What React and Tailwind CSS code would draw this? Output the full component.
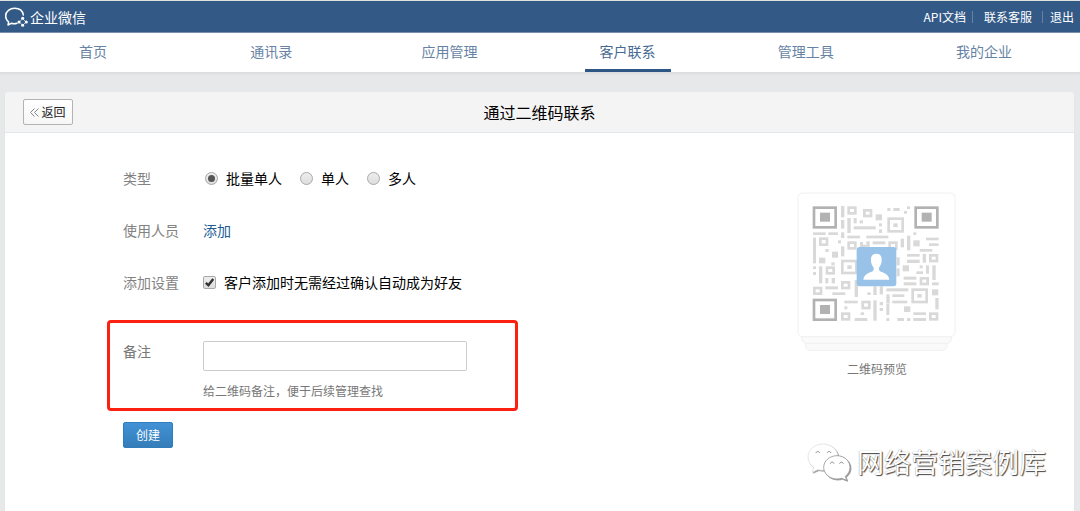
import { useState } from "react";
import clsx from "clsx";

const TABS = ["首页", "通讯录", "应用管理", "客户联系", "管理工具", "我的企业"];
const TYPES = ["批量单人", "单人", "多人"];

// [x, y, width, height] of the solid modules
const QR_BARS = [
    [152, 62, 10, 34], [152, 104, 10, 26], [171, 98, 10, 45], [190, 98, 9, 16], [208, 105, 10, 9],
    [190, 123, 66, 9], [256, 87, 19, 18], [266, 114, 9, 9], [266, 132, 9, 11], [291, 68, 9, 9],
    [309, 68, 19, 9], [350, 63, 9, 8], [341, 77, 9, 8], [68, 141, 38, 8], [114, 141, 29, 8],
    [152, 141, 10, 17], [171, 151, 38, 8], [228, 151, 66, 8], [350, 151, 10, 44], [369, 141, 9, 8],
    [331, 160, 10, 26], [68, 157, 9, 77], [143, 165, 9, 9], [152, 183, 10, 30], [105, 191, 10, 9],
    [125, 199, 18, 18], [209, 170, 9, 16], [218, 178, 9, 8], [247, 168, 38, 9], [228, 168, 10, 18],
    [369, 165, 19, 18], [407, 157, 38, 8], [416, 174, 29, 8], [388, 191, 38, 8], [350, 206, 38, 8],
    [397, 206, 10, 26], [350, 223, 38, 10], [319, 216, 9, 24], [319, 249, 9, 24], [337, 240, 19, 18],
    [388, 240, 9, 9], [378, 258, 20, 8], [407, 240, 9, 25], [426, 240, 10, 44], [86, 217, 19, 17],
    [123, 231, 10, 9], [68, 243, 9, 8], [68, 260, 9, 9], [86, 243, 10, 51], [105, 278, 9, 16],
    [124, 278, 10, 16], [340, 274, 38, 9], [340, 291, 38, 9], [425, 291, 20, 9], [193, 284, 10, 51],
    [105, 303, 38, 9], [126, 321, 39, 8], [231, 321, 10, 8], [249, 303, 10, 26], [268, 303, 10, 24],
    [288, 309, 66, 9], [288, 327, 10, 27], [306, 327, 36, 8], [306, 346, 45, 8], [425, 312, 19, 18],
    [435, 338, 10, 34], [162, 346, 40, 8], [249, 345, 10, 61], [268, 350, 10, 10], [268, 368, 10, 9],
    [288, 355, 9, 34], [341, 363, 19, 17], [162, 363, 9, 9], [211, 381, 10, 8], [369, 381, 38, 8],
    [193, 398, 38, 9], [288, 398, 9, 9], [321, 398, 20, 9], [350, 398, 10, 9], [369, 398, 38, 9],
];

// Hollow squares: [x, y, width, height]
const QR_RINGS = [
    [175, 67, 20, 17], [222, 75, 20, 17], [295, 100, 42, 38], [175, 172, 20, 17], [298, 172, 20, 18],
    [90, 160, 20, 18], [110, 247, 20, 17], [156, 227, 42, 36], [156, 291, 20, 17], [72, 308, 20, 17],
    [156, 385, 20, 17], [217, 350, 20, 18], [420, 210, 20, 17], [392, 279, 20, 17], [367, 313, 42, 37],
    [420, 385, 20, 17],
];

// Dots inside the large hollow squares
const QR_DOTS = [[309, 114], [171, 240], [381, 326]];

const QR_FINDERS = [[66, 62], [371, 62], [66, 339]];

function Logo() {
    return (
        <svg className="h-[21px] w-6" viewBox="12 18 72 63" fill="none" stroke="#fff" aria-hidden="true">
            <path
                d="M70 45C68 33 58 25 44 25S17 34 17 48c0 8 4 14 9 18l-2 9 10-5c6 2 11 2 17 0"
                strokeWidth="4.5"
                strokeLinejoin="round"
                strokeLinecap="round"
            />
            <path d="M68 56l10 10-10 10-10-10z" strokeWidth="2" />
            <g fill="#fff" stroke="none">
                <circle cx="68" cy="55" r="4.5" />
                <circle cx="79" cy="66" r="4.5" />
                <circle cx="68" cy="76" r="4.5" />
                <circle cx="57" cy="66" r="4.5" />
            </g>
        </svg>
    );
}

function QrPreview() {
    return (
        <svg className="size-40" viewBox="20 20 480 480" role="img" aria-label="二维码预览">
            <g fill="#fafafa" stroke="#f0f0f0" strokeWidth="3">
                <rect x="46" y="400" width="424" height="95" rx="14" />
                <rect x="34" y="380" width="449" height="94" rx="14" />
                <rect x="23" y="23" width="471" height="431" rx="14" fill="#fff" />
            </g>
            <g fill="#d9d9d9">
                {QR_BARS.map(([x, y, w, h]) => (
                    <rect key={`${x}-${y}`} x={x} y={y} width={w} height={h} />
                ))}
            </g>
            <g fill="#fff" stroke="#d9d9d9" strokeWidth="8">
                {QR_RINGS.map(([x, y, w, h]) => (
                    <rect key={`${x}-${y}`} x={x} y={y} width={w} height={h} />
                ))}
            </g>
            <g fill="#d9d9d9">
                {QR_DOTS.map(([x, y]) => (
                    <rect key={`${x}-${y}`} x={x} y={y} width="13" height="11" />
                ))}
            </g>
            {QR_FINDERS.map(([x, y]) => (
                <g key={`${x}-${y}`}>
                    <rect x={x + 5} y={y + 5} width="65" height="59" fill="none" stroke="#b2b2b2" strokeWidth="8" />
                    <rect x={x + 23} y={y + 20} width="30" height="27" fill="#b2b2b2" />
                </g>
            ))}
            <rect x="199" y="185" width="119" height="118" rx="9" fill="#99c2e8" />
            <path
                d="M258 205c-11 0-17 8-16 20 0 9 3 16 8 22 1 7-1 10-6 12-13 5-23 9-25 24h78c-2-15-12-19-25-24-5-2-7-5-6-12 5-6 8-13 8-22 1-12-5-20-16-20z"
                fill="#fff"
            />
        </svg>
    );
}

function Watermark() {
    return (
        <div className="pointer-events-none absolute right-[34px] bottom-[30px] flex items-center gap-[6px]">
            <svg
                className="h-[38px] w-11 drop-shadow-[1px_1px_0px_#999]"
                viewBox="24 36 132 114"
                fill="#fff"
                stroke="#ccc"
                strokeWidth="1.5"
                aria-hidden="true"
            >
                <path d="M72 39c-25 0-45 17-45 39 0 13 7 24 17 31l-4 15 17-8c5 1 10 2 15 2 25 0 45-18 45-40S97 39 72 39z" />
                <path
                    d="M114 74c-22 0-40 16-40 35s18 35 40 35c5 0 10-1 14-2l15 6-4-12c9-7 14-16 14-27 0-19-17-35-39-35z"
                    stroke="#999"
                    strokeWidth="2.5"
                />
                <g fill="none" stroke="#888" strokeWidth="3">
                    <path d="M51 66c1-6 9-6 11 0M85 66c1-6 9-6 11 0M94 98c1-6 9-6 11 0M122 98c1-6 9-6 11 0" />
                </g>
            </svg>
            <span className="text-[27px] leading-9 text-white [text-shadow:1px_1px_1px_#444,0_0_1px_#888]">
                网络营销案例库
            </span>
        </div>
    );
}

function App() {
    const [type, setType] = useState(TYPES[0]);
    const [autoAccept, setAutoAccept] = useState(true);
    const [remark, setRemark] = useState("");

    return (
        <div className="relative flex min-h-screen flex-col bg-[#e7e8ea] font-['Noto_Sans_CJK_SC',sans-serif] text-sm leading-5 text-black">
            <header className="flex h-[33px] items-center justify-between border-t border-b border-t-[#dfe3e0] border-b-[#7790ae] bg-[#335a87] pr-[6px] pl-1 text-white">
                <a href="#home" className="flex items-center gap-[2px]">
                    <Logo />
                    <span>企业微信</span>
                </a>
                <div className="flex items-center text-xs">
                    <a href="#api">API文档</a>
                    <span className="mr-[11px] ml-[6px] h-3 w-px bg-[#6583a5]" />
                    <a href="#support">联系客服</a>
                    <span className="mr-[7px] ml-[10px] h-3 w-px bg-[#6583a5]" />
                    <a href="#logout">退出</a>
                </div>
            </header>

            <nav className="flex h-10 border-b border-[#dcdddf] bg-white pr-[7px] pl-1 shadow-xs">
                {TABS.map((tab) => (
                    <div key={tab} className="flex flex-1 justify-center">
                        <a
                            href="#tab"
                            className={clsx(
                                "border-b-3 px-[15px] pt-2",
                                tab === "客户联系"
                                    ? "border-[#2d5685] text-[#476a92]"
                                    : "border-transparent text-[#6783a4]"
                            )}
                        >
                            {tab}
                        </a>
                    </div>
                ))}
            </nav>

            <main className="mr-[6px] ml-[5px] mt-[19px] flex flex-1 flex-col rounded-t-sm bg-white shadow-xs">
                <div className="grid h-[41px] grid-cols-3 items-center rounded-t-sm border-b border-[#e2e7ec] bg-[#f4f4f4] px-[18px]">
                    <button
                        type="button"
                        className="flex h-[26px] w-[50px] items-center justify-center gap-[2px] rounded-xs border border-[#b3b3b3] bg-linear-to-b from-white to-[#f6f6f6] text-xs text-[#222]"
                    >
                        <svg className="size-[9px]" viewBox="0 0 9 9" fill="none" stroke="#888" aria-hidden="true">
                            <path d="M4.5 0.5l-4 4 4 4M8.5 0.5l-4 4 4 4" />
                        </svg>
                        返回
                    </button>
                    <h1 className="text-center text-base leading-5">通过二维码联系</h1>
                </div>

                <div className="flex justify-between pr-[117px] pl-[102px]">
                    <form className="pt-[35px]" onSubmit={(e) => e.preventDefault()}>
                        <div className="flex flex-col gap-8 pl-4">
                            <div className="flex" role="radiogroup" aria-labelledby="type-label">
                                <span id="type-label" className="w-20 text-[#828282]">类型</span>
                                <div className="flex gap-[18px] pl-[2px]">
                                    {TYPES.map((name) => (
                                        <label key={name} className="flex items-center gap-2">
                                            <input
                                                type="radio"
                                                name="type"
                                                checked={type === name}
                                                onChange={() => setType(name)}
                                                className="flex size-[13px] appearance-none items-center justify-center rounded-full border border-[#a8a8a8] bg-linear-to-b from-[#eee] to-[#ddd] checked:before:size-[7px] checked:before:rounded-full checked:before:bg-[#555] checked:before:content-['']"
                                            />
                                            {name}
                                        </label>
                                    ))}
                                </div>
                            </div>

                            <div className="flex">
                                <span className="w-20 text-[#828282]">使用人员</span>
                                <a href="#add" className="text-[#205c94]">添加</a>
                            </div>

                            <div className="flex">
                                <span className="w-20 text-[#828282]">添加设置</span>
                                <label className="flex items-center gap-2">
                                    <span className="grid size-[13px] place-items-center">
                                        <input
                                            type="checkbox"
                                            checked={autoAccept}
                                            onChange={(e) => setAutoAccept(e.target.checked)}
                                            className="peer col-start-1 row-start-1 size-[13px] appearance-none rounded-xs border border-[#a8a8a8] bg-linear-to-b from-[#eee] to-[#ddd]"
                                        />
                                        <svg
                                            className="pointer-events-none invisible col-start-1 row-start-1 size-[9px] peer-checked:visible"
                                            viewBox="0 0 9 9"
                                            fill="none"
                                            stroke="#333"
                                            strokeWidth="2.4"
                                            aria-hidden="true"
                                        >
                                            <path d="M0.8 4.8l2.6 2.4L8.2 1" />
                                        </svg>
                                    </span>
                                    客户添加时无需经过确认自动成为好友
                                </label>
                            </div>
                        </div>

                        <div className="mt-7 flex w-[411px] rounded-sm border-3 border-[#fb2010] pt-[18px] pb-[7px] pl-[13px]">
                            <label htmlFor="remark" className="w-20 text-[#777]">备注</label>
                            <div>
                                <input
                                    id="remark"
                                    type="text"
                                    value={remark}
                                    onChange={(e) => setRemark(e.target.value)}
                                    className="block h-[30px] w-[264px] rounded-xs border border-[#ccc] bg-white px-2"
                                />
                                <p className="mt-[10px] text-xs leading-5 text-[#777]">给二维码备注，便于后续管理查找</p>
                            </div>
                        </div>

                        <button
                            type="submit"
                            className="mt-[11px] ml-4 h-[26px] w-[50px] rounded-xs border border-[#2f7dbd] bg-linear-to-b from-[#4292d6] to-[#347db8] text-xs text-white"
                        >
                            创建
                        </button>
                    </form>

                    <div className="flex flex-col items-center pt-[59px]">
                        <QrPreview />
                        <p className="mt-[7px] text-xs leading-5 text-[#777]">二维码预览</p>
                    </div>
                </div>
            </main>

            <Watermark />
        </div>
    );
}

export default App;
